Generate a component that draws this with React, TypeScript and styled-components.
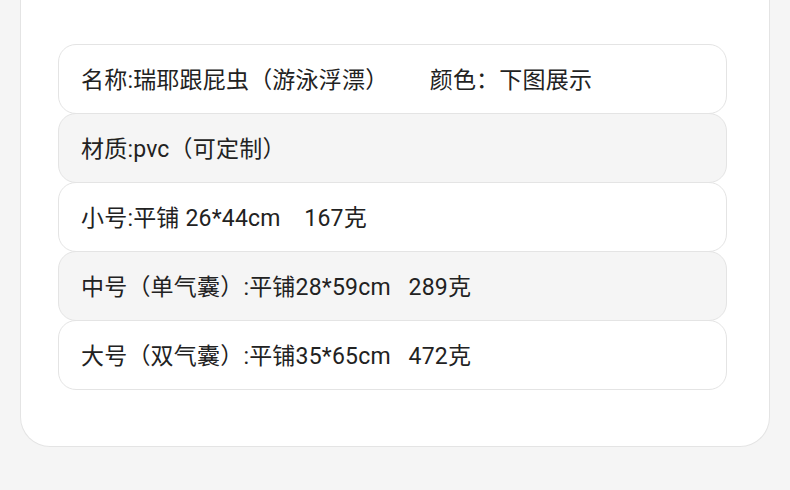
import React from "react";
import styled, {createGlobalStyle} from "styled-components";

type Spec = {
    text: string
    tone: "white" | "grey"
}

const specs: Spec[] = [
    {text: "名称:瑞耶跟屁虫（游泳浮漂）       颜色：下图展示", tone: "white"},
    {text: "材质:pvc（可定制）", tone: "grey"},
    {text: "小号:平铺 26*44cm    167克", tone: "white"},
    {text: "中号（单气囊）:平铺28*59cm   289克", tone: "grey"},
    {text: "大号（双气囊）:平铺35*65cm   472克", tone: "white"},
];

export default function App() {
    return (
        <Page>
            <GlobalStyle/>
            <Card>
                <List>
                    {specs.map((spec, i) => (
                        <Row key={i} $tone={spec.tone}>{spec.text}</Row>
                    ))}
                </List>
            </Card>
        </Page>
    );
}

const GlobalStyle = createGlobalStyle`
    html, body {
        margin: 0;
        padding: 0;
        background: #f5f5f5;
    }`
;
const Page = styled.div`
    width: 790px;
    height: 490px;
    padding: 0 20px;
    box-sizing: border-box;
    background: #f5f5f5;
    font-family: "Roboto", "Noto Sans CJK SC", sans-serif;`
;
const Card = styled.div`
    width: 750px;
    box-sizing: border-box;
    background: #fff;
    border: 1px solid #e4e4e4;
    border-top: none;
    border-radius: 0 0 30px 30px;
    padding: 44px 42px 56px 37px;`
;
const List = styled.div`
    display: flex;
    flex-direction: column;`
;
const Row = styled.div<{ $tone: "white" | "grey" }>`
    height: 70px;
    box-sizing: border-box;
    margin-top: -1px;
    display: flex;
    align-items: center;
    padding: 0 22px 2px;
    border: 1px solid #e4e4e4;
    border-radius: 18px;
    background: ${p => p.$tone === "grey" ? "#f5f5f5" : "#fff"};
    color: #222;
    font-size: 23px;
    letter-spacing: 0.2px;
    white-space: pre;
    &:first-child {
        margin-top: 0;
    }`
;
